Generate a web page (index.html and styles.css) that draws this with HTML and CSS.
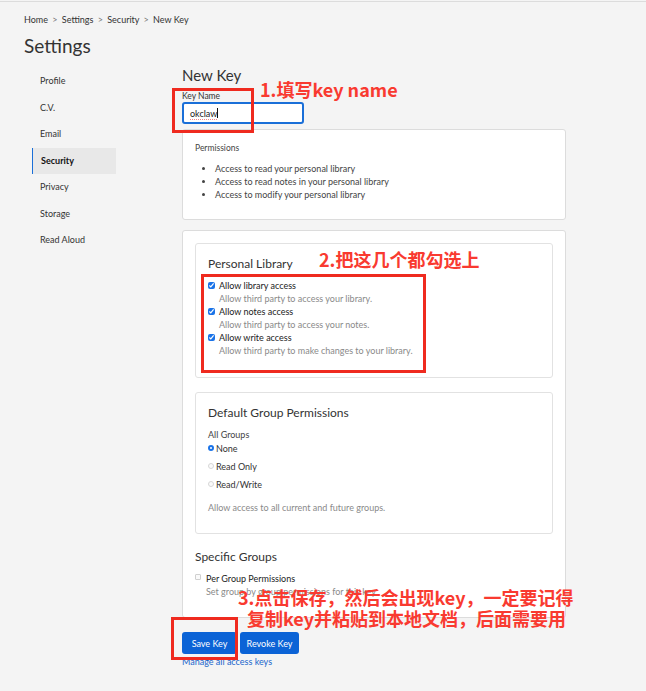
FILE: index.html
```html
<!DOCTYPE html>
<html lang="en">

<head>
    <meta charset="UTF-8">
    <meta name="viewport" content="width=device-width, initial-scale=1.0">
    <title>New Key</title>
    <link rel="stylesheet" href="styles.css">
</head>

<body>
    <div class="page">
        <div class="breadcrumb">Home <span class="sep">&gt;</span> Settings <span class="sep">&gt;</span> Security <span class="sep">&gt;</span> New Key</div>
        <h1 class="page-title">Settings</h1>

        <div class="layout">
            <nav class="sidebar">
                <a class="nav-item">Profile</a>
                <a class="nav-item">C.V.</a>
                <a class="nav-item">Email</a>
                <a class="nav-item active">Security</a>
                <a class="nav-item">Privacy</a>
                <a class="nav-item">Storage</a>
                <a class="nav-item">Read Aloud</a>
            </nav>

            <main class="main">
                <h2 class="main-title">New Key</h2>

                <label class="field-label" for="keyName">Key Name</label>
                <div class="text-input" id="keyName"><span class="typed">okclaw</span><span class="caret"></span></div>

                <div class="card perms">
                    <div class="perms-title">Permissions</div>
                    <ul class="perms-list">
                        <li>Access to read your personal library</li>
                        <li>Access to read notes in your personal library</li>
                        <li>Access to modify your personal library</li>
                    </ul>
                </div>

                <div class="card outer">
                    <div class="card inner library">
                        <h3 class="section-title">Personal Library</h3>
                        <div class="check-row">
                            <input type="checkbox" checked>
                            <div>
                                <div class="check-label">Allow library access</div>
                                <div class="help">Allow third party to access your library.</div>
                            </div>
                        </div>
                        <div class="check-row">
                            <input type="checkbox" checked>
                            <div>
                                <div class="check-label">Allow notes access</div>
                                <div class="help">Allow third party to access your notes.</div>
                            </div>
                        </div>
                        <div class="check-row">
                            <input type="checkbox" checked>
                            <div>
                                <div class="check-label">Allow write access</div>
                                <div class="help">Allow third party to make changes to your library.</div>
                            </div>
                        </div>
                    </div>

                    <div class="card inner groups">
                        <h3 class="section-title">Default Group Permissions</h3>
                        <div class="group-label">All Groups</div>
                        <label class="radio-row"><span class="radio on"></span>None</label>
                        <label class="radio-row"><span class="radio"></span>Read Only</label>
                        <label class="radio-row"><span class="radio"></span>Read/Write</label>
                        <div class="help groups-help">Allow access to all current and future groups.</div>
                    </div>

                    <h3 class="section-title specific">Specific Groups</h3>
                    <div class="check-row plain">
                        <span class="box"></span>
                        <div>
                            <div class="check-label">Per Group Permissions</div>
                            <div class="help">Set group by group permissions for this key</div>
                        </div>
                    </div>
                </div>

                <div class="actions">
                    <button class="btn save">Save Key</button>
                    <button class="btn revoke">Revoke Key</button>
                </div>
                <a class="manage-link" href="#">Manage all access keys</a>
            </main>
        </div>
    </div>

    <!-- annotations drawn over the screenshot -->
    <div class="mark mark-name"></div>
    <div class="mark mark-checks"></div>
    <div class="mark mark-save"></div>
    <div class="note note-1">1.填写key name</div>
    <div class="note note-2">2.把这几个都勾选上</div>
    <div class="note note-3">
        <div>3.点击保存，然后会出现key，一定要记得</div>
        <div class="indent">复制key并粘贴到本地文档，后面需要用</div>
    </div>
</body>

</html>
```

FILE: styles.css
```css
html {
    background-color: #f4f4f4;
}

body {
    margin: 0;
    margin-top: 1px;
    border-top: 1px solid #dcdcdc;
    background-color: #f4f4f4;
    font-family: Lato, "Noto Sans", sans-serif;
    font-size: 9px;
    color: #222;
    position: relative;
    min-height: 689px;
}

.page {
    padding-left: 24px;
}

.breadcrumb {
    padding-top: 13px;
    line-height: 10px;
    color: #333;
}

.breadcrumb .sep {
    color: #777;
    margin: 0 2px;
}

.page-title {
    margin: 9px 0 0;
    font-size: 19px;
    line-height: 24px;
    font-weight: 400;
    color: #333;
}

.layout {
    display: flex;
}

.sidebar {
    width: 158px;
    padding: 10px 0 0 8px;
    box-sizing: border-box;
    display: flex;
    flex-direction: column;
}

.nav-item {
    width: 84px;
    height: 26.5px;
    line-height: 26.5px;
    padding-left: 8px;
    box-sizing: border-box;
    color: #333;
}

.nav-item.active {
    background-color: #e8e8e8;
    border-left: 1px solid #1a6fd8;
    font-weight: 700;
    color: #111;
    height: 26px;
    line-height: 26px;
    margin-bottom: 0.5px;
}

.main {
    width: 384px;
    padding-top: 8px;
}

.main-title {
    margin: 0;
    font-size: 15px;
    line-height: 18px;
    font-weight: 400;
    color: #333;
}

.field-label {
    display: block;
    margin-top: 7px;
    font-size: 8.5px;
    line-height: 10px;
    color: #333;
}

.text-input {
    display: flex;
    align-items: center;
    margin-top: 1px;
    width: 122px;
    height: 22px;
    box-sizing: border-box;
    border: 2px solid #1a6fd8;
    border-radius: 3px;
    padding: 0 6px;
    color: #222;
    background: #fff;
}

.typed {
    text-decoration: underline dotted #e88;
    text-underline-offset: 2px;
}

.caret {
    display: inline-block;
    width: 1px;
    height: 10px;
    background: #111;
}

.card {
    background-color: #fff;
    border: 1px solid #dcdcdc;
    border-radius: 3px;
    box-sizing: border-box;
}

.perms {
    margin-top: 5px;
    height: 91px;
    padding: 13px 12px 0;
}

.perms-title {
    font-size: 8.5px;
    line-height: 10px;
    color: #444;
}

.perms-list {
    margin: 8.5px 0 0;
    padding-left: 20px;
    line-height: 13px;
    color: #444;
}

.outer {
    margin-top: 10px;
    height: 388px;
    padding: 12px;
}

.inner {
    border-color: #e2e2e2;
    padding: 12px 12px 0;
}

.library {
    height: 135px;
}

.groups {
    margin-top: 14px;
    height: 142px;
}

.section-title {
    margin: 0;
    font-size: 12px;
    line-height: 16px;
    font-weight: 400;
    color: #333;
}

.check-row {
    display: flex;
    gap: 4px;
    align-items: flex-start;
}

.library .check-row:first-of-type {
    margin-top: 6.5px;
}

.check-row input {
    width: 7px;
    height: 7px;
    margin: 3px 0 0;
    accent-color: #1a73e8;
}

.check-label {
    line-height: 13px;
    color: #222;
}

.help {
    line-height: 13px;
    color: #8a8a8a;
}

.group-label {
    margin-top: 8px;
    line-height: 12px;
    color: #444;
}

.radio-row {
    display: flex;
    align-items: center;
    gap: 2px;
    height: 14px;
    color: #333;
    margin-bottom: 4px;
}

.radio {
    width: 6px;
    height: 6px;
    border-radius: 50%;
    border: 1px solid #d6d6d6;
    box-sizing: border-box;
    background: #fafafa;
}

.radio.on {
    border: 2px solid #1a73e8;
    background: #fff;
}

.groups-help {
    margin-top: 11px;
    line-height: 12px;
}

.specific {
    margin-top: 15px;
}

.plain {
    margin-top: 6.5px;
    gap: 5px;
}

.box {
    width: 6px;
    height: 6px;
    margin-top: 2px;
    border: 1px solid #d0d0d0;
    border-radius: 1px;
    box-sizing: border-box;
    background: #fafafa;
}

.actions {
    margin-top: 14px;
    display: flex;
    gap: 3px;
}

.btn {
    height: 22px;
    padding: 0;
    border: none;
    border-radius: 3px;
    background-color: #0b63d6;
    color: #fff;
    font-family: Lato, sans-serif;
    font-size: 9px;
    cursor: pointer;
}

.save {
    width: 55px;
}

.revoke {
    width: 59px;
}

.manage-link {
    display: block;
    margin-top: 3px;
    line-height: 10px;
    color: #1a66cc;
    text-decoration: none;
}

.mark {
    position: absolute;
    border: 3px solid #ef2a1f;
    box-sizing: border-box;
}

.mark-name {
    left: 172px;
    top: 86px;
    width: 82px;
    height: 45px;
}

.mark-checks {
    left: 201px;
    top: 272px;
    width: 225px;
    height: 99px;
}

.mark-save {
    left: 171px;
    top: 615px;
    width: 67px;
    height: 43px;
}

.note {
    position: absolute;
    font-family: "Noto Sans CJK SC", "Liberation Sans", sans-serif;
    font-weight: 700;
    font-size: 18px;
    line-height: 21px;
    color: #f93a30;
    white-space: nowrap;
}

.note-1 {
    left: 260px;
    top: 77px;
}

.note-2 {
    left: 319px;
    top: 247px;
}

.note-3 {
    left: 238px;
    top: 585px;
}

.note-3 .indent {
    padding-left: 9px;
}
```
